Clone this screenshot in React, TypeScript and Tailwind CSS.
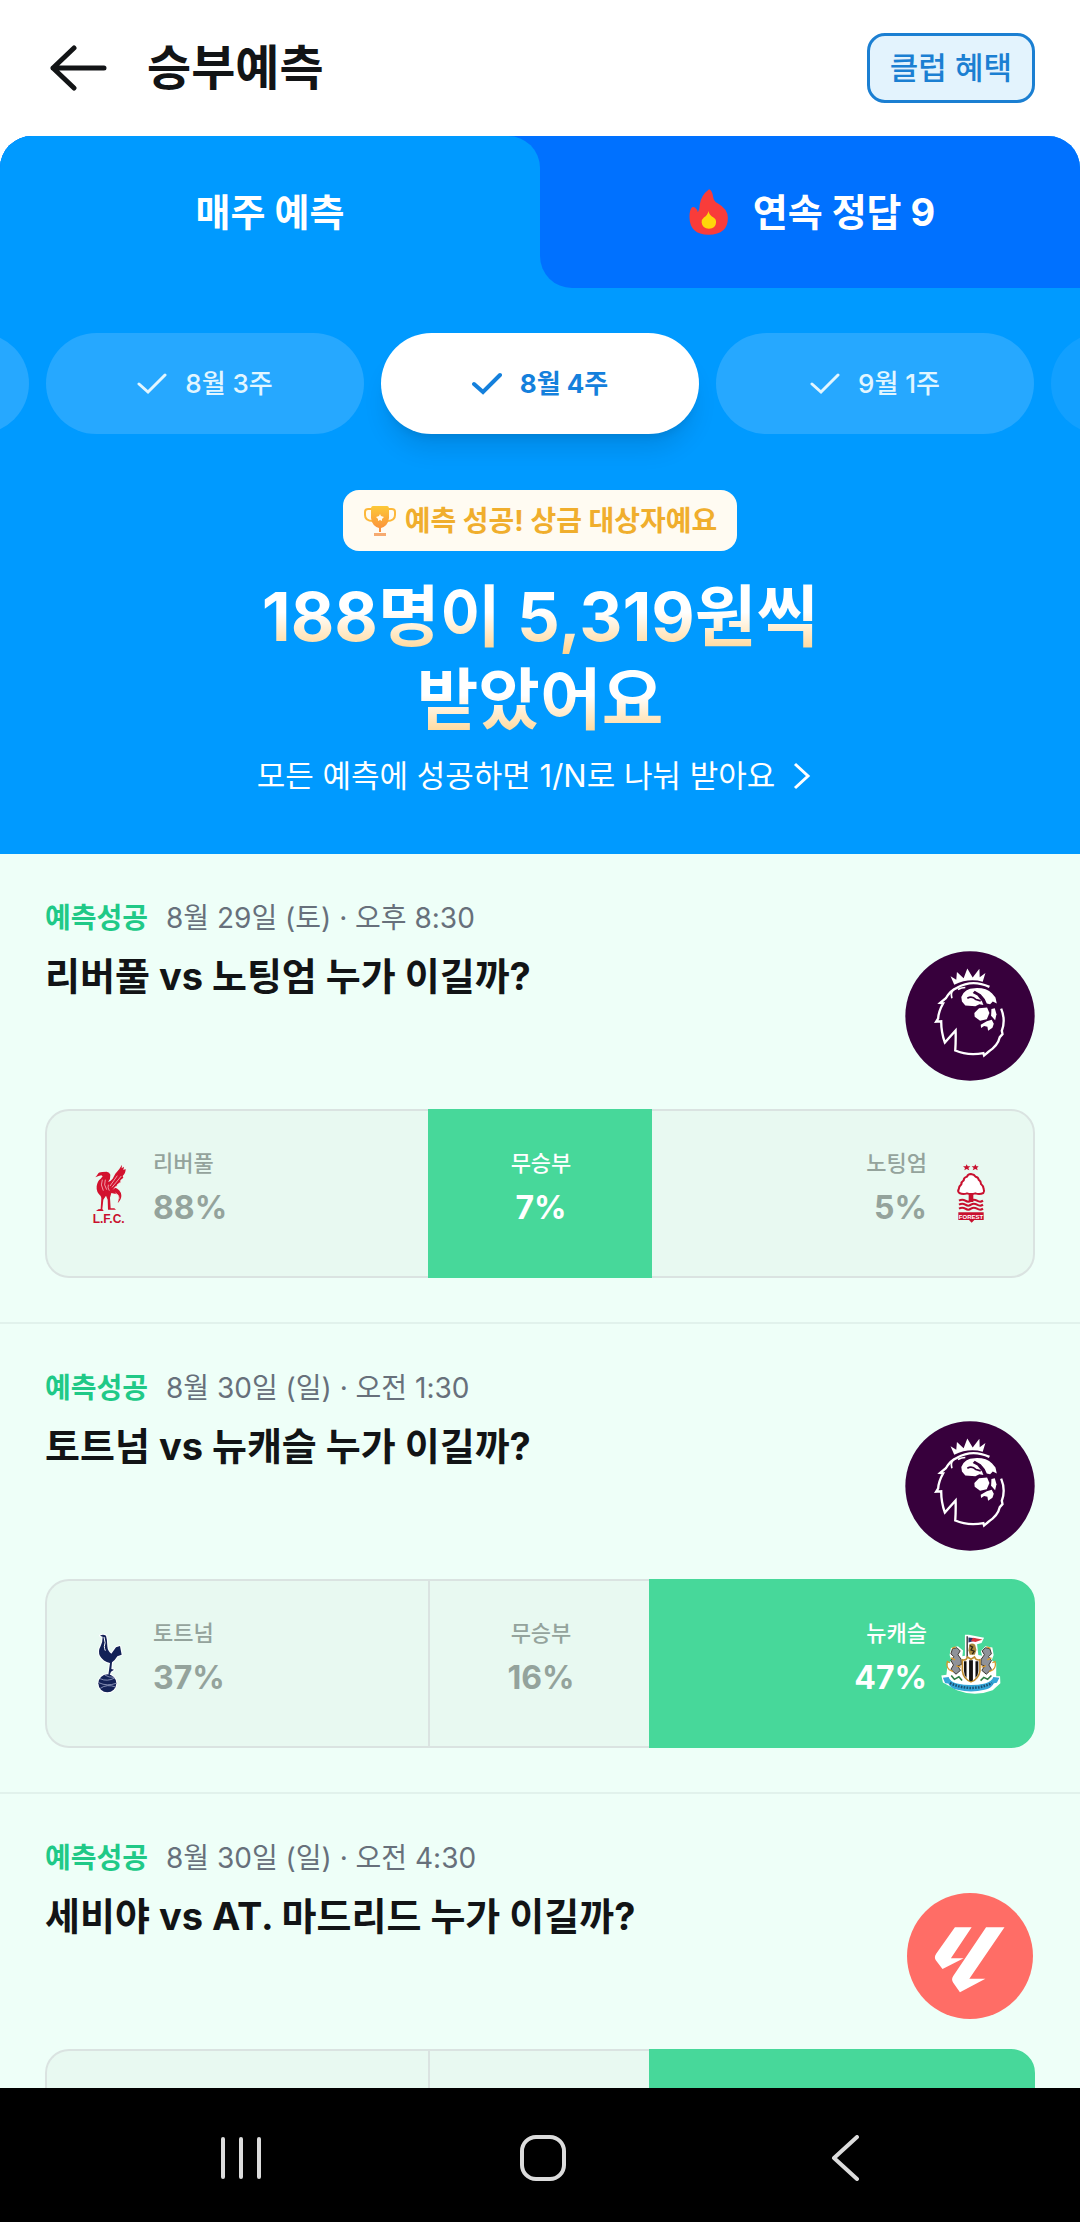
import { useState } from "react"
import type { ReactNode } from "react"
import { clsx } from "clsx"

type Side = "home" | "draw" | "away"

interface Option {
  name: string
  percent?: number
  logo?: ReactNode
}

interface Match {
  id: number
  date: string
  title: string
  league: ReactNode
  result: Side
  options: Record<Side, Option>
}

function PremierLeagueLogo() {
  return (
    <svg viewBox="78 65 388 388" className="size-[130px]" role="img" aria-label="프리미어리그">
      <circle cx="272" cy="259" r="193" fill="#37003c" />
      <path
        fill="#fff"
        d="M225 166 214 140l17 11 2-23 20 18 11-29 16 27 20-26 1 25 17-12-8 26q-42-12-85 9z"
      />
      <g fill="none" stroke="#fff" strokeWidth="7" strokeLinejoin="miter">
        <path d="M330 172q-52-24-97 3-20 8-33 31l-17 14 9 1q-14 25-15 45l-6 10 15-1q0 34 11 63l32-36q1 30-1 60 36 16 84 8l2 7 14-12q27-17 33-43l8-9-2-10q12-32-2-66" />
        <path d="M218 206q-6-18 8-28M236 180q10-6 22-6" strokeWidth="5" />
      </g>
      <g fill="#fff">
        <path d="M246 202q10-26 40-26 34-2 52 16l10 12 4 18-12-6-8 8-10-2-6-14-12-14-18-10-6 6 14 8 14 18 4 10-12-2-12 6-30-2-10-12z" />
        <path d="m285 250 14-14 24-2 7 16-8 19-20 4-16-12z" />
        <path d="M336 238l10-2 5 18-4 18-12-14z" />
        <path d="m304 285 18-10 15-5 6 12-4 12-13 9-2-12-10-2-9 6z" />
      </g>
      <path d="M264 206q14-8 26 4l14 4" fill="none" stroke="#37003c" strokeWidth="5" />
    </svg>
  )
}

function LaLigaLogo() {
  return (
    <svg viewBox="78 34 388 388" className="size-[130px]" role="img" aria-label="라리가">
      <circle cx="272" cy="228" r="188" fill="#ff6d66" />
      <path fill="#fff" d="M227 142h50l-62 93h38l-63 32-20-26q-6-10 1-20z" />
      <path fill="#fff" d="M320 142h55L270 296h48l-76 40-20-28q-7-10 0-20z" />
    </svg>
  )
}

function LiverpoolLogo() {
  return (
    <svg viewBox="57 72 180 180" className="size-15 shrink-0 overflow-visible" role="img" aria-label="리버풀 로고">
      <g fill="#d2122e">
        <path d="M113 103q3-7 14-7l13-1q9 1 11 9l-1 13-6 9q8-2 14-10l8-15 12-14 8-13-1 11 7-5-2 10 7-3q0 13-9 21l2 5-9 8 1 6-10 6-1 5-9 4q20 6 22 24 1 12-11 24 8-21-2-27l-17-4-4 14 2 32h11l5 4h-24l-1-30-5-12-8 12-3 28 4 6h-23l7-5 7-1 2-33-2-6q-14-12-12-29 2-16 12-23l6-7-4-3-8 2-10 4 4-5z" />
      </g>
      <g fill="none" stroke="#ffe3e3" strokeWidth="2">
        <path d="m150 138 22-31M156 142l28-34M160 148l24-25M127 119q-7 15 3 33M136 119q-6 16 4 30M145 134q-3 10 3 18M166 159q12 5 11 18" />
      </g>
      <text
        x="146"
        y="248"
        textAnchor="middle"
        fontSize="36"
        fontWeight="700"
        fontFamily="Liberation Sans, sans-serif"
        fill="#c8102e"
      >
        L.F.C.
      </text>
    </svg>
  )
}

function ForestLogo() {
  return (
    <svg viewBox="300 72 180 180" className="size-15 shrink-0 overflow-visible" role="img" aria-label="노팅엄 로고">
      <g fill="#c8102e">
        <path d="m377 73 3 6h8l-6 5 3 7-8-4-7 4 2-7-6-5h8zM403 73l3 6h7l-5 5 2 7-7-4-8 4 3-7-6-5h8z" />
        <path d="M383 158h14v28h-14z" />
      </g>
      <path
        d="M390 102q-10 1-12 8-10 3-10 11-7 4-7 12-7 5-8 15-4 6 2 11 11 5 23 1 12 4 25 0 13 4 24-1 4-5 1-12-1-10-8-15 0-8-7-13-1-7-9-9-4-7-14-8z"
        fill="#fff"
        stroke="#c8102e"
        strokeWidth="6"
      />
      <path
        d="M354 182q10-6 19 0t17 0 18 0 18 0M354 194q10-6 19 0t17 0 18 0 18 0M354 206q10-6 19 0t17 0 18 0 18 0"
        fill="none"
        stroke="#c8102e"
        strokeWidth="6"
      />
      <path d="M352 217h76v23h-28l-8 8-8-8h-32z" fill="#c8102e" />
      <text
        x="390"
        y="237"
        textAnchor="middle"
        fontSize="18"
        fontWeight="700"
        fontFamily="Liberation Sans, sans-serif"
        fill="#fff"
      >
        FOREST
      </text>
    </svg>
  )
}

function TottenhamLogo() {
  return (
    <svg viewBox="57 99 180 180" className="size-15 shrink-0" role="img" aria-label="토트넘 로고">
      <g stroke="#fff" strokeWidth="6" strokeLinejoin="round" fill="#fff">
        <path d="M120 104q9-5 18 0 4 12 4 32 1 15 12 22l14-19 12-4 5 26-13 5q-7 12-16 18l-2 20 8 2-9 6-4 10h-4l5-36q-21-5-30-21-7-14 2-30 6-12 6-28z" />
        <circle cx="142" cy="247" r="27" />
      </g>
      <path
        fill="#132257"
        d="M120 104q9-5 18 0 4 12 4 32 1 15 12 22l14-19 12-4 5 26-13 5q-7 12-16 18l-2 20 8 2-9 6-4 10h-4l5-36q-21-5-30-21-7-14 2-30 6-12 6-28z"
      />
      <path d="M132 108q6 20 1 28 0 7 3 13" stroke="#fff" strokeWidth="3" fill="none" />
      <circle cx="142" cy="247" r="27" fill="#132257" />
      <path
        d="M120 233q22 10 44-2M116 245q26 12 52 2M121 262q20-14 46-4M134 222q12 8 29 7"
        fill="none"
        stroke="#b8c0dc"
        strokeWidth="2"
      />
    </svg>
  )
}

function NewcastleLogo() {
  return (
    <svg viewBox="357 126 186 188" className="size-15 shrink-0" role="img" aria-label="뉴캐슬 로고">
      <path
        fill="#fff"
        d="M431 128h12l48 10-8 16-14 4 4 34 12 2-4-14 14-16 22 4 4 24-6 16 14 10v40l12 0 1 22-24 22q-56 22-112 0l-44-24-5-22 16-2 4-36 12-8-6-18 4-22 22-6 16 14-2 18 8-2z"
      />
      <path d="M436 133h4v66h-4z" fill="#222" />
      <path d="m442 137 22 2-2 8-20 6z" fill="#27366b" />
      <path d="m456 138 30 5-22 8-14-3z" fill="#d9343e" />
      <path d="M445 158q10-6 18 2l4 16-5 15h-16l-4-14z" fill="#a9863c" />
      <path d="m446 162 9 5-5 9 10 4-6 9" stroke="#2c2415" strokeWidth="4" fill="none" />
      <g fill="#8f9299" stroke="#38322b" strokeWidth="3">
        <path d="m387 188 5-16 14-3 10 10-7 12 10 14 1 17-12 4 9 14-14 12-16-15 8-14-8-14 9-12z" />
        <path d="m514 188-5-16-14-3-10 10 7 12-10 14-1 17 12 4-9 14 14 12 16-15-8-14 8-14-9-12z" />
      </g>
      <g fill="none" stroke="#d79a2b" strokeWidth="4">
        <path d="m390 171 12-5M384 216l-8-4q-5 16 6 26l12 6M387 201l13 6M404 226l14 4" />
        <path d="m511 171-12-5M517 216l8-4q5 16-6 26l-12 6M514 201l-13 6M497 226l-14 4" />
      </g>
      <path
        d="M423 207q12 3 16-9l11 7 11-7q5 12 17 9v35q-4 25-28 34-24-9-27-34z"
        fill="#fff"
        stroke="#c08d2d"
        strokeWidth="5"
      />
      <path d="M428 211h8v53q-8-10-8-22zM444 208h12v64l-6 2-6-2zM464 211h9v31q0 12-9 22z" fill="#15120f" />
      <path d="m388 256 10 12 14-8 10 12M480 272l10-10 12 6 12-12" stroke="#2e7d45" strokeWidth="5" fill="none" />
      <path
        d="m362 263 18-2q4 15 26 20 44 10 88 0 22-6 26-20l19 2-8 16-9 1q-10 17-30 21-42 10-84 0-22-5-29-20l-10-1z"
        fill="#34a5d8"
      />
      <path d="M384 280q66 30 132 0" stroke="#1d4f72" strokeWidth="8" strokeDasharray="5 4" fill="none" />
    </svg>
  )
}

function CheckIcon({ bold }: { bold: boolean }) {
  return (
    <svg
      viewBox="0 0 30 24"
      className="h-6 w-[30px]"
      fill="none"
      stroke="currentColor"
      strokeWidth={bold ? 4 : 3}
      strokeLinecap="round"
      aria-hidden="true"
    >
      <path d="m2 12 9 8L28 3" />
    </svg>
  )
}

function FlameIcon() {
  return (
    <svg viewBox="45 50 146 150" className="size-12" aria-hidden="true">
      <path
        fill="#f93c3a"
        d="M118 54q10 3 13 24 2 14 14 20 32 18 32 46 0 52-60 52-60 0-60-56 0-22 8-30 6-2 10 2 8 6 8 14 6-8 6-24 3-28 29-48z"
      />
      <path fill="#ffd60a" d="M116 122q-2 14-14 20-8 6-7 16 2 19 23 19t22-19q1-11-8-16-13-6-16-20z" />
    </svg>
  )
}

function TrophyIcon() {
  return (
    <svg viewBox="0 0 34 34" className="size-[34px]" aria-hidden="true">
      <defs>
        <linearGradient id="trophy" x1="0" y1="0" x2="0" y2="1">
          <stop offset="0" stopColor="#fdc937" />
          <stop offset="1" stopColor="#fb8a3c" />
        </linearGradient>
      </defs>
      <path
        d="M9 5H5Q2 5 2 8v3q0 6 8 6M25 5h4q3 0 3 3v3q0 6-8 6"
        fill="none"
        stroke="#fdb83a"
        strokeWidth="2"
      />
      <path d="M10 2h14q2 0 2 3v9q-1 8-8 10v4h-2v-4q-7-2-8-10V5q0-3 2-3z" fill="url(#trophy)" />
      <path d="M11 29h12v3H11z" fill="#f6aa70" />
      <path d="m17 10 1 2 3 1-2 2v2l-2-1-2 1v-2l-2-2 3-1z" fill="#fffbf0" />
    </svg>
  )
}

// the first and last week only peek in from the edges
const weeks = [
  { label: "8월 2주", peek: true, upcoming: false },
  { label: "8월 3주", peek: false, upcoming: false },
  { label: "8월 4주", peek: false, upcoming: false },
  { label: "9월 1주", peek: false, upcoming: false },
  { label: "9월 2주", peek: true, upcoming: true },
]

const matches: Match[] = [
  {
    id: 1,
    date: "8월 29일 (토) · 오후 8:30",
    title: "리버풀 vs 노팅엄 누가 이길까?",
    league: <PremierLeagueLogo />,
    result: "draw",
    options: {
      home: { name: "리버풀", percent: 88, logo: <LiverpoolLogo /> },
      draw: { name: "무승부", percent: 7 },
      away: { name: "노팅엄", percent: 5, logo: <ForestLogo /> },
    },
  },
  {
    id: 2,
    date: "8월 30일 (일) · 오전 1:30",
    title: "토트넘 vs 뉴캐슬 누가 이길까?",
    league: <PremierLeagueLogo />,
    result: "away",
    options: {
      home: { name: "토트넘", percent: 37, logo: <TottenhamLogo /> },
      draw: { name: "무승부", percent: 16 },
      away: { name: "뉴캐슬", percent: 47, logo: <NewcastleLogo /> },
    },
  },
  {
    id: 3,
    date: "8월 30일 (일) · 오전 4:30",
    title: "세비야 vs AT. 마드리드 누가 이길까?",
    league: <LaLigaLogo />,
    result: "away",
    options: {
      home: { name: "세비야" },
      draw: { name: "무승부" },
      away: { name: "AT. 마드리드" },
    },
  },
]

function OptionButton({ side, option, active }: { side: Side; option: Option; active: boolean }) {
  return (
    <button
      type="button"
      aria-label={option.name}
      aria-pressed={active}
      className={clsx(
        "flex items-center gap-[14px]",
        side === "home" && "rounded-l-3xl border-y-2 border-l-2 pl-8 text-left",
        side === "draw" && "justify-center border-y-2 border-l-2 text-center",
        side === "away" && "-ml-[3px] flex-row-reverse rounded-r-3xl border-2 pr-8 text-right",
        active ? "relative z-10 border-[#47d89a] bg-[#47d89a] text-white" : "border-[#dae3e1] bg-[#e8f9f1] text-[#94a39c]"
      )}
    >
      {option.logo}
      {option.percent !== undefined && (
        <span className="flex flex-col pb-2">
          <span className="text-[22px] leading-9 font-medium">{option.name}</span>
          <span className="text-[32px] leading-[54px] font-bold">{option.percent}%</span>
        </span>
      )}
    </button>
  )
}

function MatchCard({ match }: { match: Match }) {
  return (
    <section className="border-b-2 border-[#e1f2ec] px-[45px] pt-11 pb-11">
      <div className="flex items-center gap-[18px] text-[28px] leading-10">
        <strong className="font-bold text-[#20c987]">예측성공</strong>
        <span className="text-[#67707b]">{match.date}</span>
      </div>
      <div className="flex h-[171px] items-start justify-between">
        <h3 className="pt-3 text-[38px] leading-[52px] font-bold text-[#121416]">{match.title}</h3>
        <div className="pt-[13px]">{match.league}</div>
      </div>
      <div className="grid h-[169px] grid-cols-[12fr_7fr_12fr]">
        <OptionButton side="home" option={match.options.home} active={match.result === "home"} />
        <OptionButton side="draw" option={match.options.draw} active={match.result === "draw"} />
        <OptionButton side="away" option={match.options.away} active={match.result === "away"} />
      </div>
    </section>
  )
}

export default function App() {
  const [tab, setTab] = useState("weekly")
  const [week, setWeek] = useState("8월 4주")

  return (
    <div className="flex h-screen flex-col overflow-hidden bg-white font-['Inter','Noto_Sans_CJK_KR',sans-serif]">
      <header className="flex h-[136px] shrink-0 items-center px-[45px]">
        <button type="button" aria-label="뒤로" className="px-1">
          <svg viewBox="0 0 58 46" className="h-[46px] w-[58px]" fill="none" stroke="#121416" strokeWidth="5" strokeLinecap="round" strokeLinejoin="round">
            <path d="M25 3 4 23l21 20M4 23h51" />
          </svg>
        </button>
        <h1 className="ml-9 flex-1 text-[48px] font-bold text-[#121416]">승부예측</h1>
        <button
          type="button"
          className="h-[70px] rounded-[18px] border-3 border-[#1b7fd2] bg-[#e3f3fd] px-5 text-[31px] font-medium text-[#1b7fd2]"
        >
          클럽 혜택
        </button>
      </header>

      <main className="flex-1 overflow-y-auto [scrollbar-width:none]">
        <div className="overflow-hidden rounded-t-4xl bg-[#009aff] pb-[53px]">
          <div role="tablist" className="grid grid-cols-2 text-[38px] font-bold text-white">
            <div className="bg-[#0071ff]">
              <button
                type="button"
                role="tab"
                aria-selected={tab === "weekly"}
                onClick={() => setTab("weekly")}
                className="h-[152px] w-full rounded-tr-4xl bg-[#009aff]"
              >
                매주 예측
              </button>
            </div>
            <button
              type="button"
              role="tab"
              aria-selected={tab === "streak"}
              onClick={() => setTab("streak")}
              className="flex h-[152px] items-center justify-center gap-5 rounded-bl-4xl bg-[#0071ff]"
            >
              <FlameIcon />
              연속 정답 9
            </button>
          </div>

          <div className="flex justify-center gap-[17px] pt-[45px]">
            {weeks.map((item) => (
              <button
                key={item.label}
                type="button"
                aria-label={item.label}
                onClick={() => setWeek(item.label)}
                className={clsx(
                  "flex h-[101px] w-[318px] shrink-0 items-center justify-center gap-[18px] rounded-full text-[26px]",
                  item.label === week && "bg-white font-bold text-[#1480dc] shadow-xl",
                  item.label !== week && "font-medium text-[#e2f6ff]",
                  item.label !== week && (item.upcoming ? "bg-[#12a0ff]" : "bg-[#26a8ff]")
                )}
              >
                {!item.peek && (
                  <>
                    <CheckIcon bold={item.label === week} />
                    {item.label}
                  </>
                )}
              </button>
            ))}
          </div>

          <div className="flex flex-col items-center pt-14 text-white">
            <div className="flex h-[61px] items-center gap-2 rounded-2xl bg-[#fffbf2] px-5 text-[28px] font-bold text-[#f0ae2d]">
              <TrophyIcon />
              예측 성공! 상금 대상자예요
            </div>
            <h2 className="mt-6 text-center text-[67px] leading-[83px] font-bold">
              <span className="block bg-linear-to-b from-white from-45% to-[#ffcf80] bg-clip-text text-transparent">188명이 5,319원씩</span>
              <span className="block bg-linear-to-b from-white from-45% to-[#ffcf80] bg-clip-text text-transparent">받았어요</span>
            </h2>
            <a href="#rules" className="mt-2.5 flex items-center gap-[18px] pr-3 text-[31px] leading-[50px]">
              모든 예측에 성공하면 1/N로 나눠 받아요
              <svg viewBox="0 0 18 28" className="h-7 w-[18px]" fill="none" stroke="currentColor" strokeWidth="3" aria-hidden="true">
                <path d="m2 2 13 12L2 26" />
              </svg>
            </a>
          </div>
        </div>

        <div className="bg-[#eefff8]">
          {matches.map((match) => (
            <MatchCard key={match.id} match={match} />
          ))}
        </div>
      </main>

      <nav className="grid h-[134px] shrink-0 grid-cols-3 items-center bg-black pt-1.5 pr-[84px] pl-[90px]">
        <button type="button" aria-label="최근 앱" className="flex justify-center">
          <svg viewBox="0 0 46 46" className="size-[46px]" stroke="#dcdcdc" strokeWidth="4" strokeLinecap="round">
            <path d="M5 4v38M23 4v38M41 4v38" />
          </svg>
        </button>
        <button type="button" aria-label="홈" className="flex justify-center">
          <svg viewBox="0 0 46 46" className="size-[46px]" fill="none" stroke="#dcdcdc" strokeWidth="4">
            <rect x="2" y="2" width="42" height="42" rx="14" />
          </svg>
        </button>
        <button type="button" aria-label="이전" className="flex justify-center">
          <svg viewBox="0 0 30 46" className="h-[46px] w-[30px]" fill="none" stroke="#dcdcdc" strokeWidth="4" strokeLinecap="round" strokeLinejoin="round">
            <path d="M27 2 4 23l23 21" />
          </svg>
        </button>
      </nav>
    </div>
  )
}
